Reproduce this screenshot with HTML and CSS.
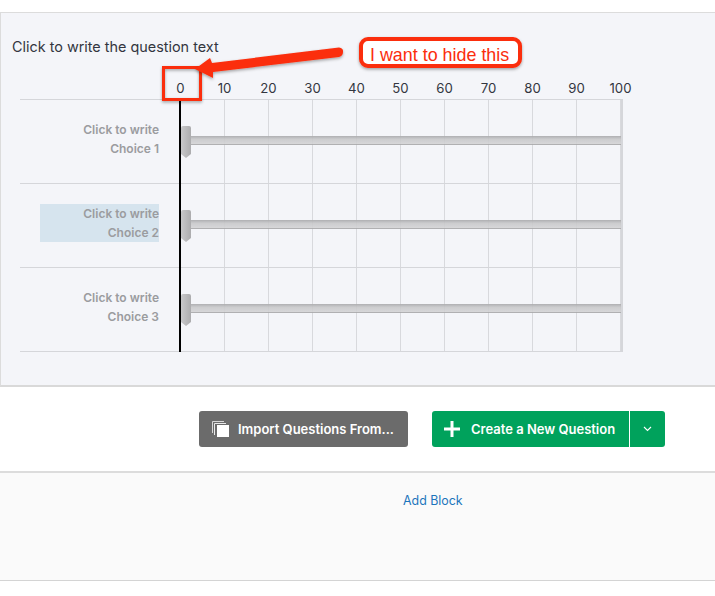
FILE: index.html
```html
<!DOCTYPE html>
<html>
  <head>
    <meta charset="utf-8" />
    <link rel="stylesheet" href="styles.css">
  </head>
  <body>
    <div class="question">
      <div class="question-text">Click to write the question text</div>
      <div class="matrix">
        <div class="scale">
          <span>0</span><span>10</span><span>20</span><span>30</span><span>40</span><span>50</span><span>60</span><span>70</span><span>80</span><span>90</span><span>100</span>
        </div>
        <div class="row">
          <div class="choice"><span class="choice-text">Click to write<br />Choice 1</span></div>
          <div class="track"><div class="bar"></div><div class="handle"></div></div>
        </div>
        <div class="row">
          <div class="choice"><span class="choice-text selected">Click to write<br />Choice 2</span></div>
          <div class="track"><div class="bar"></div><div class="handle"></div></div>
        </div>
        <div class="row row-last">
          <div class="choice"><span class="choice-text">Click to write<br />Choice 3</span></div>
          <div class="track"><div class="bar"></div><div class="handle"></div></div>
        </div>
        <div class="zero-line"></div>
      </div>
    </div>

    <div class="actions">
      <button class="btn btn-import">
        <svg class="icon-copy" width="18" height="16" viewBox="0 0 18 16">
          <path d="M0.5 0.5H12M0.5 0.5V12" fill="none" stroke="#d8d8d8" stroke-width="1" />
          <path d="M2.5 2.5H14M2.5 2.5V14" fill="none" stroke="#e8e8e8" stroke-width="1" />
          <rect x="5" y="4" width="12" height="12" fill="#fff" />
        </svg>
        Import Questions From...
      </button>
      <div class="btn-group">
        <button class="btn btn-create">
          <svg class="icon-plus" width="16" height="16" viewBox="0 0 16 16">
            <path d="M6.5 0H9.5V6.5H16V9.5H9.5V16H6.5V9.5H0V6.5H6.5Z" fill="#fff" />
          </svg>
          Create a New Question
        </button>
        <button class="btn btn-caret">
          <svg width="9" height="6" viewBox="0 0 9 6">
            <path d="M1 1L4.5 4.5L8 1" fill="none" stroke="#fff" stroke-width="1.1" />
          </svg>
        </button>
      </div>
    </div>

    <div class="add-block">
      <a href="#">Add Block</a>
    </div>

    <!-- screenshot annotation -->
    <svg class="annotation" width="715" height="120" viewBox="0 0 715 120">
      <defs>
        <filter id="shadow" x="-10%" y="-30%" width="120%" height="160%">
          <feDropShadow dx="0" dy="1.5" stdDeviation="1.5" flood-color="#000" flood-opacity="0.35" />
        </filter>
      </defs>
      <rect x="163.500" y="67.500" width="37" height="32" fill="none" stroke="#fb2d0c" stroke-width="3" filter="url(#shadow)" />
      <path d="M195 69L210 58L212 63L339 47.500Q343.500 48 343 52Q343 56 339 57L213 72L213 78Z" fill="#fb2d0c" filter="url(#shadow)" />
      <rect x="361" y="39" width="159" height="27" rx="7" fill="#fff" stroke="#fb2d0c" stroke-width="4" filter="url(#shadow)" />
    </svg>
    <div class="callout">I want to hide this</div>
  </body>
</html>
```

FILE: styles.css
```css
body {
  margin: 0;
  background: #ffffff;
  font-family: Inter, "Liberation Sans", sans-serif;
  position: relative;
  height: 596px;
  overflow: hidden;
}
.question {
  margin-top: 12px;
  height: 372px;
  background: #f4f5f9;
  border: 1px solid #dcdcdc;
  border-right: none;
  border-bottom: 2px solid #d9d9d9;
}
.question-text {
  padding: 25px 0 0 11px;
  height: 18px;
  font-size: 14.4px;
  line-height: 18px;
  color: #33363f;
}
.matrix {
  position: relative;
  margin: 22px 0 0 19px;
  width: 603px;
}
.scale {
  display: flex;
  height: 21px;
  padding-left: 138.500px;
  font-size: 13.2px;
  line-height: 20px;
  color: #33363f;
}
.scale span {
  flex: none;
  width: 44px;
  text-align: center;
}
.row {
  display: flex;
  height: 83px;
  border-top: 1px solid #d5d6da;
}
.row-last {
  border-bottom: 1px solid #d5d6da;
}
.choice {
  flex: none;
  width: 139px;
  margin-right: 22px;
  padding-top: 20px;
  display: flex;
  justify-content: flex-end;
}
.choice-text {
  display: block;
  height: 38px;
  font-size: 12px;
  font-weight: 600;
  line-height: 19px;
  text-align: right;
  color: #9b9c9f;
}
.choice-text.selected {
  width: 119px;
  background: #d6e4ee;
}
.track {
  position: relative;
  flex: 1;
  border-right: 2px solid #d5d6da;
  background-image: repeating-linear-gradient(
    to right,
    transparent 0,
    transparent 43px,
    #d8d9dd 43px,
    #d8d9dd 44px
  );
}
.bar {
  position: absolute;
  top: 36px;
  left: 0;
  right: 0;
  height: 8px;
  background: linear-gradient(#a9a9ab, #c8c8ca 40%, #d4d4d6);
  border-bottom: 1px solid #a9a9ab;
  opacity: 0.9;
}
.handle {
  position: absolute;
  top: 26px;
  left: 0;
  width: 10px;
  height: 32px;
  background: linear-gradient(to right, #c8c8ca, #acacae);
  border-radius: 2px 2px 0 0;
  clip-path: polygon(0 0, 100% 0, 100% 28px, 5px 32px, 0 28px);
}
.zero-line {
  position: absolute;
  top: 21px;
  bottom: 0;
  left: 159px;
  width: 2px;
  background: #000000;
}
.actions {
  display: flex;
  justify-content: flex-end;
  align-items: center;
  gap: 24px;
  height: 84px;
  padding-right: 50px;
}
.btn {
  display: flex;
  align-items: center;
  height: 36px;
  border: none;
  color: #ffffff;
  font-family: inherit;
  font-size: 13px;
  font-weight: 600;
  cursor: pointer;
}
.btn-import {
  width: 209px;
  padding: 0 0 0 13px;
  background: #6b6b6b;
  border-radius: 3px;
}
.icon-copy {
  margin-right: 8px;
}
.btn-group {
  display: flex;
}
.btn-create {
  width: 197px;
  padding: 0 0 0 12px;
  background: #00a25c;
  border-radius: 3px 0 0 3px;
}
.icon-plus {
  margin-right: 11px;
}
.btn-caret {
  width: 36px;
  padding: 0;
  justify-content: center;
  background: #00a25c;
  border-left: 1px solid #ffffff;
  border-radius: 0 3px 3px 0;
}
.add-block {
  height: 107px;
  background: #fafafa;
  border-top: 2px solid #dcdcdc;
  border-bottom: 1px solid #d4d4d4;
  padding-left: 403px;
  font-size: 12.4px;
  line-height: 16px;
}
.add-block a {
  display: block;
  padding-top: 20px;
  color: #1c75bc;
  text-decoration: none;
}
.annotation {
  position: absolute;
  top: 0;
  left: 0;
}
.callout {
  position: absolute;
  top: 45px;
  left: 370px;
  font-family: "Liberation Sans", sans-serif;
  font-size: 17.9px;
  line-height: 21px;
  color: #fb2d0c;
}
```
